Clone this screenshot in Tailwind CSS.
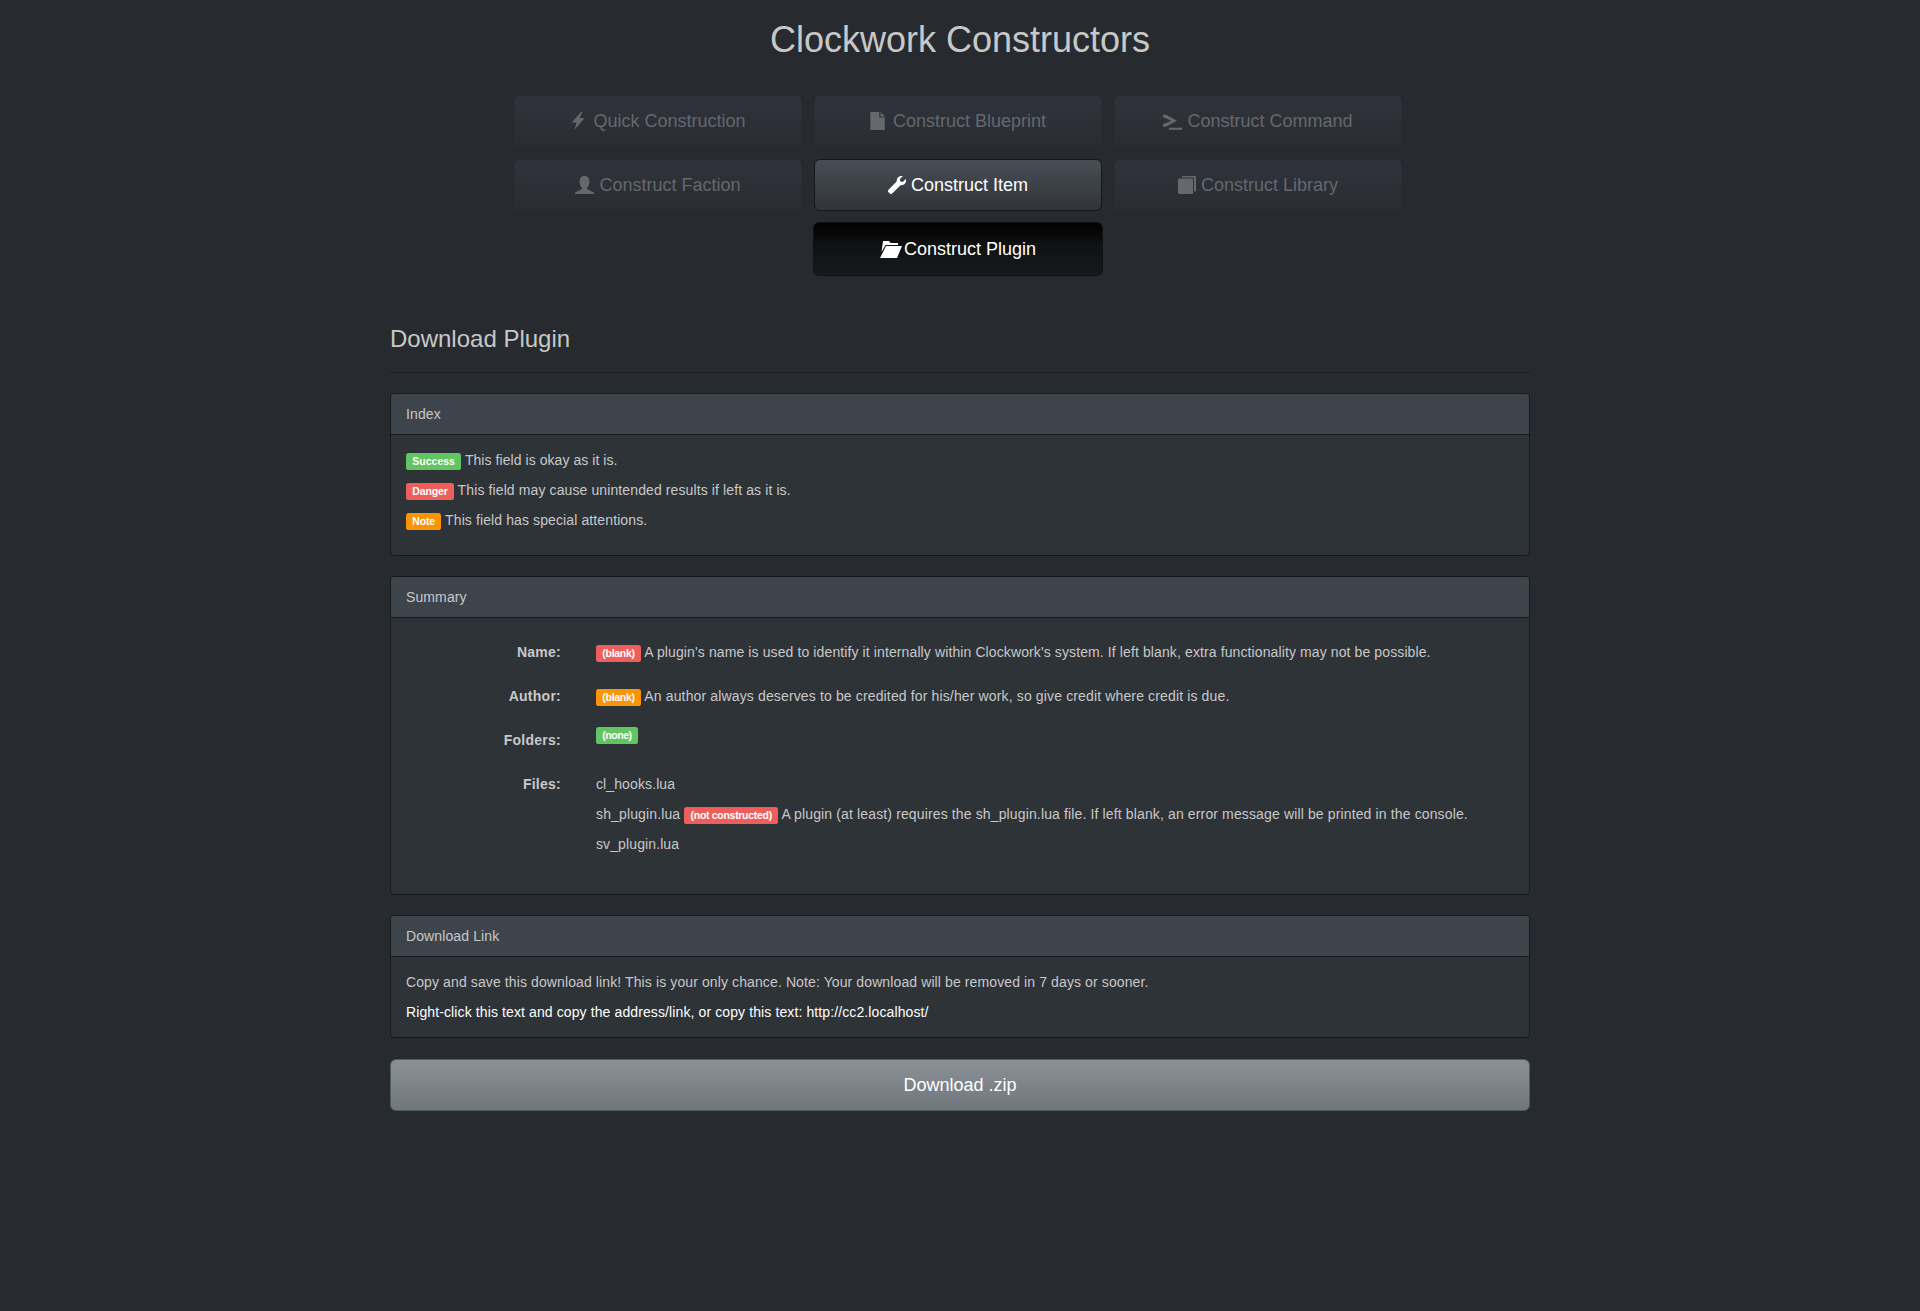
<!DOCTYPE html>
<html lang="en">
<head>
<meta charset="utf-8">
<title>Clockwork Constructors</title>
<script src="https://cdn.jsdelivr.net/npm/@tailwindcss/browser@4"></script>
</head>
<body class="bg-[#272b30] text-[#c8c8c8] font-['Liberation_Sans','Arial',sans-serif] text-[14px] leading-[20px] tracking-[0.11px] min-h-[1311px]">
<div class="w-[1170px] mx-auto px-[15px]">
  <h1 class="text-center text-[36px] leading-[40px] tracking-normal pt-[20px] mb-[35px]">Clockwork Constructors</h1>

  <div class="w-[888px] ml-[124px] grid grid-cols-3 gap-x-[12px] gap-y-[12px] text-[18px] leading-[24px] tracking-normal">
    <a class="h-[52px] flex items-center justify-center gap-[5px] rounded-[6px] bg-gradient-to-b from-[#30333c] to-[#2a2d31] border border-[#2a2d32] text-[#65686d]">
      <svg class="w-[18px] h-[18px] fill-current" viewBox="0 0 18 18"><path d="M11 0 1.7 10.500h5L4.200 18 14.700 6h-5.200L12.500 0z"/></svg><span>Quick Construction</span>
    </a>
    <a class="h-[52px] flex items-center justify-center gap-[5px] rounded-[6px] bg-gradient-to-b from-[#30333c] to-[#2a2d31] border border-[#2a2d32] text-[#65686d]">
      <svg class="w-[18px] h-[18px] fill-current" viewBox="0 0 18 18"><path d="M.3 0h9v5.500h5.500V18H.3zM10.500 0 15 4.500h-4.500z"/></svg><span>Construct Blueprint</span>
    </a>
    <a class="h-[52px] flex items-center justify-center gap-[5px] rounded-[6px] bg-gradient-to-b from-[#30333c] to-[#2a2d31] border border-[#2a2d32] text-[#65686d]">
      <svg class="w-[19px] h-[18px] fill-current" viewBox="0 0 19 18"><path d="M0 2.700h3L14 8.700 3 14.700H0v-2.500L8.500 8.700 0 5.200zM6 15.700h13v2H6z"/></svg><span>Construct Command</span>
    </a>
    <a class="h-[52px] flex items-center justify-center gap-[5px] rounded-[6px] bg-gradient-to-b from-[#30333c] to-[#2a2d31] border border-[#2a2d32] text-[#65686d]">
      <svg class="w-[19px] h-[18px] fill-current" viewBox="0 0 19 18"><path d="M9.500 0C13 0 14.500 2.500 14.500 6 14.500 8.500 13 11 12 12v1l7 3.500V18H0v-1.500L7 13v-1C6 11 4.500 8.500 4.500 6 4.500 2.500 6 0 9.500 0z"/></svg><span>Construct Faction</span>
    </a>
    <a class="h-[52px] flex items-center justify-center gap-[5px] rounded-[6px] bg-gradient-to-b from-[#484e55] via-[#3a3f44] via-60% to-[#313539] border border-[#15171a] text-white">
      <svg class="w-[18px] h-[18px] fill-current" viewBox="0 0 18 18"><path d="M13.500 0C10.500 0 8.500 2.500 8.700 5.500L.5 13.800C-.2 14.600-.2 15.600.5 16.300L1.800 17.500C2.500 18.200 3.500 18.200 4.200 17.500L12.500 9.300C15.500 9.500 18 7.500 18 4.500 18 4 18 3.500 17.800 3L14.800 6 12.300 5.400 11.800 3 14.800.2C14.400 0 14 0 13.500 0z"/></svg><span>Construct Item</span>
    </a>
    <a class="h-[52px] flex items-center justify-center gap-[5px] rounded-[6px] bg-gradient-to-b from-[#30333c] to-[#2a2d31] border border-[#2a2d32] text-[#65686d]">
      <svg class="w-[18px] h-[18px] fill-current" viewBox="0 0 18 18"><path d="M4 0h14v15.500h-2V1.500H4zM1.500 2.500H15V18H1.500C.5 18 0 17.300 0 16.500V4C0 3 .5 2.500 1.500 2.500z"/></svg><span>Construct Library</span>
    </a>
    <a class="col-start-2 h-[54px] -mt-[1px] -mx-[1px] flex items-center justify-center gap-[2px] rounded-[6px] bg-gradient-to-b from-[#020202] via-[#101112] via-40% to-[#17191b] border border-[#111214] text-white">
      <svg class="w-[22px] h-[17px] fill-current" viewBox="0 0 22 17"><path d="M3 0h6l1.500 2H18v2H5.500L1.500 11zM6 5h16l-5 12H0z"/></svg><span>Construct Plugin</span>
    </a>
  </div>

  <h2 class="text-[24px] leading-[26px] tracking-normal mt-[50px] pb-[20px] border-b border-[#1c1e22]">Download Plugin</h2>

  <section class="mt-[20px] border border-[#16181b] rounded-[4px] bg-[#2e3338] overflow-hidden">
    <div class="h-[41px] px-[15px] py-[10px] bg-[#3e444c] border-b border-[#16181b]">Index</div>
    <div class="p-[15px]">
      <p class="mb-[10px] tracking-[0.06px]"><span class="px-[0.6em] pt-[0.2em] pb-[0.3em] text-[75%] font-bold leading-none tracking-normal text-white rounded-[0.25em] whitespace-nowrap bg-[#62c462]">Success</span> This field is okay as it is.</p>
      <p class="mb-[10px]"><span class="px-[0.6em] pt-[0.2em] pb-[0.3em] text-[75%] font-bold leading-none tracking-[-0.15px] text-white rounded-[0.25em] whitespace-nowrap bg-[#ee5f5b]">Danger</span> This field may cause unintended results if left as it is.</p>
      <p class="mb-[10px]"><span class="px-[0.6em] pt-[0.2em] pb-[0.3em] text-[75%] font-bold leading-none tracking-[-0.15px] text-white rounded-[0.25em] whitespace-nowrap bg-[#f89406]">Note</span> This field has special attentions.</p>
    </div>
  </section>

  <section class="mt-[20px] border border-[#16181b] rounded-[4px] bg-[#2e3338] overflow-hidden">
    <div class="h-[41px] px-[15px] py-[10px] bg-[#3e444c] border-b border-[#16181b]">Summary</div>
    <div class="p-[15px]">
      <div class="flex h-[29px] mb-[15px] pt-[9px]">
        <div class="w-[155px] text-right font-bold tracking-[0.25px]">Name:</div>
        <div class="ml-[35px]"><span class="px-[0.6em] pt-[0.2em] pb-[0.3em] text-[75%] font-bold leading-none tracking-[-0.28px] text-white rounded-[0.25em] whitespace-nowrap bg-[#ee5f5b]">(blank)</span> A plugin's name is used to identify it internally within Clockwork's system. If left blank, extra functionality may not be possible.</div>
      </div>
      <div class="flex h-[29px] mb-[15px] pt-[9px]">
        <div class="w-[155px] text-right font-bold tracking-[0.25px]">Author:</div>
        <div class="ml-[35px] tracking-[0.14px]"><span class="px-[0.6em] pt-[0.2em] pb-[0.3em] text-[75%] font-bold leading-none tracking-[-0.28px] text-white rounded-[0.25em] whitespace-nowrap bg-[#f89406]">(blank)</span> An author always deserves to be credited for his/her work, so give credit where credit is due.</div>
      </div>
      <div class="flex h-[29px] mb-[15px] pt-[9px]">
        <div class="w-[155px] text-right font-bold tracking-[0.25px]">Folders:</div>
        <div class="ml-[35px] -mt-[6px]"><span class="px-[0.6em] pt-[0.2em] pb-[0.3em] text-[75%] font-bold leading-none tracking-[-0.45px] text-white rounded-[0.25em] whitespace-nowrap bg-[#62c462]">(none)</span></div>
      </div>
      <div class="flex mb-[15px] pt-[9px]">
        <div class="w-[155px] text-right font-bold tracking-[0.25px]">Files:</div>
        <div class="ml-[35px]">
          <p class="mb-[10px]">cl_hooks.lua</p>
          <p class="mb-[10px] tracking-[0.135px]">sh_plugin.lua <span class="px-[0.6em] pt-[0.2em] pb-[0.3em] text-[75%] font-bold leading-none tracking-[-0.3px] text-white rounded-[0.25em] whitespace-nowrap bg-[#ee5f5b]">(not constructed)</span> A plugin (at least) requires the sh_plugin.lua file. If left blank, an error message will be printed in the console.</p>
          <p class="mb-[10px]">sv_plugin.lua</p>
        </div>
      </div>
    </div>
  </section>

  <section class="mt-[20px] border border-[#16181b] rounded-[4px] bg-[#2e3338] overflow-hidden">
    <div class="h-[41px] px-[15px] py-[10px] bg-[#3e444c] border-b border-[#16181b]">Download Link</div>
    <div class="p-[15px]">
      <p class="mb-[10px]">Copy and save this download link! This is your only chance. Note: Your download will be removed in 7 days or sooner.</p>
      <p class="mb-[0px] text-white">Right-click this text and copy the address/link, or copy this text: http://cc2.localhost/</p>
    </div>
  </section>

  <a class="mt-[21px] h-[52px] flex items-center justify-center rounded-[6px] bg-gradient-to-b from-[#8a9196] via-[#7a8288] via-60% to-[#70787d] border border-[#555b60] text-white text-[18px] leading-[24px] tracking-normal">Download .zip</a>
</div>
</body>
</html>
